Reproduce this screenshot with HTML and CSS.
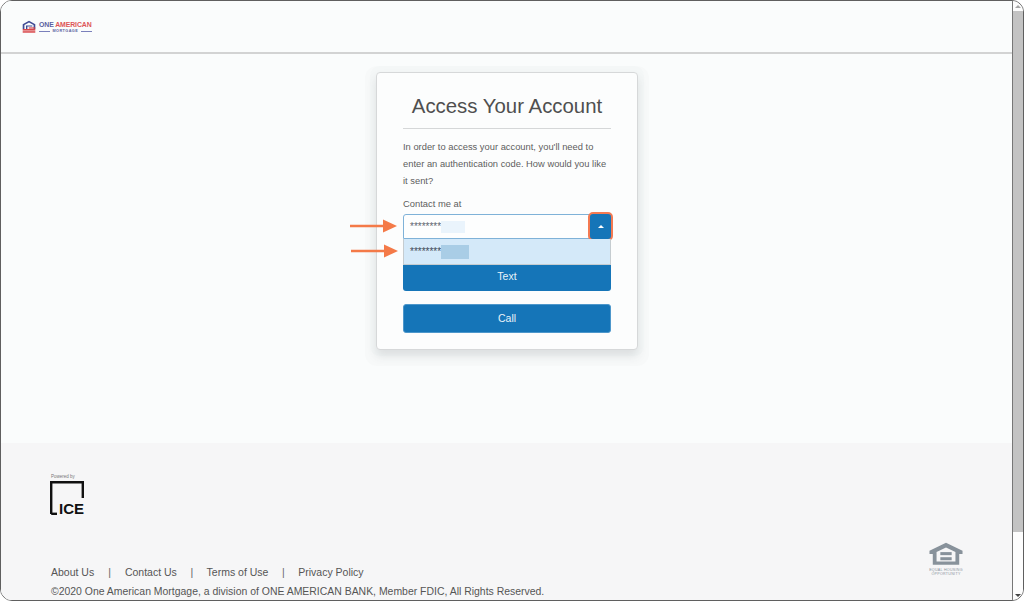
FILE: index.html
```html
<!DOCTYPE html>
<html lang="en">
<head>
<meta charset="utf-8">
<title>Access Your Account</title>
<link rel="stylesheet" href="styles.css">
</head>
<body>
<div class="window">
  <div class="page">
    <header class="topbar">
      <div class="logo">
        <svg class="logo-mark" width="14" height="13" viewBox="0 0 14 13">
          <path d="M0.7 9V4.2L7 0.8l6.3 3.4V9H11.6V5.1L7 2.6 2.4 5.1V9z" fill="#3f4a94"/>
          <path d="M4 9V5.4h6.3v1.2H5.4V9z" fill="#3f4a94"/>
          <rect x="0.7" y="9" width="12.6" height="1.6" fill="#d9474a"/>
          <rect x="0.7" y="11.2" width="12.6" height="1.5" fill="#d9474a"/>
          <rect x="6.8" y="7.4" width="6.5" height="1.2" fill="#d9474a"/>
        </svg>
        <div class="logo-text">
          <div class="logo-name"><span class="logo-one">ONE </span><span class="logo-american">AMERICAN</span></div>
          <div class="logo-sub"><span class="logo-rule"></span><span>MORTGAGE</span><span class="logo-rule"></span></div>
        </div>
      </div>
    </header>
    <main class="content">
      <section class="card">
        <h1 class="card-title">Access Your Account</h1>
        <p class="card-intro">In order to access your account, you'll need to enter an authentication code. How would you like it sent?</p>
        <label class="field-label">Contact me at</label>
        <div class="select-row">
          <svg class="arrow" width="48" height="14" viewBox="0 0 48 14"><path d="M0 7h36" stroke="#f47a48" stroke-width="2.4"/><path d="M33 0.5L47 7 33 13.5z" fill="#f47a48"/></svg>
          <div class="select">
            <span class="mask">********<span class="redact redact-light"></span></span>
            <span class="select-btn"><span class="caret"></span></span>
          </div>
        </div>
        <div class="option-row">
          <svg class="arrow" width="48" height="14" viewBox="0 0 48 14"><path d="M0 7h36" stroke="#f47a48" stroke-width="2.4"/><path d="M33 0.5L47 7 33 13.5z" fill="#f47a48"/></svg>
          <div class="option"><span class="mask">********<span class="redact redact-dark"></span></span></div>
        </div>
        <button class="btn btn-text" type="button">Text</button>
        <button class="btn btn-call" type="button">Call</button>
      </section>
    </main>
    <footer class="footer">
      <div class="powered">
        <div class="powered-label">Powered by</div>
        <div class="ice">
          <svg class="ice-frame" width="34" height="34" viewBox="0 0 34 34"><path d="M1.2 33V1.2H32.8V17" fill="none" stroke="#111" stroke-width="2.4"/><path d="M1.2 32.8H7" stroke="#111" stroke-width="2.4"/></svg>
          <span class="ice-text">ICE</span>
        </div>
      </div>
      <div class="footer-bottom">
        <div class="footer-info">
          <nav class="links">
            <a>About Us</a><span class="sep sep-wide">|</span><a>Contact Us</a><span class="sep">|</span><a>Terms of Use</a><span class="sep">|</span><a>Privacy Policy</a>
          </nav>
          <p class="copyright">©2020 One American Mortgage, a division of ONE AMERICAN BANK, Member FDIC, All Rights Reserved.</p>
        </div>
        <div class="eho">
          <svg width="34" height="24" viewBox="0 0 36 24"><path fill-rule="evenodd" d="M18 0L35.5 8.6V12H32V23.5H4V12H0.5V8.6zM8 10v10h20V10L18 5z" fill="#88929b"/><rect x="12" y="10" width="12" height="3.2" fill="#88929b"/><rect x="12" y="15.4" width="12" height="3.2" fill="#88929b"/></svg>
          <div class="eho-text">EQUAL HOUSING<br>OPPORTUNITY</div>
        </div>
      </div>
    </footer>
  </div>
  <aside class="scrollbar">
    <span class="tri tri-up"></span>
    <span class="thumb"></span>
    <span class="tri tri-down"></span>
  </aside>
</div>
</body>
</html>
```
FILE: styles.css
```css
* { box-sizing: border-box; }
html, body { margin: 0; height: 100%; background: #fff; overflow: hidden; }
body { font-family: "Liberation Sans", Arial, sans-serif; color: #555; }

.window {
  width: 1024px; height: 601px;
  display: flex;
  border: 1px solid #5f5f5f;
  border-radius: 12px;
  overflow: hidden;
  background: #fff;
}
.page { flex: 1; display: flex; flex-direction: column; background: #fafcfc; min-width: 0; border-right: 1px solid #777; }

.topbar {
  height: 53px; flex: none;
  display: flex; align-items: center;
  padding: 0 0 0 21px;
  border-bottom: 2px solid #d2d3d3;
  background: #fafcfc;
}
.logo { display: flex; align-items: center; gap: 3px; }
.logo-mark { display: block; }
.logo-text { display: flex; flex-direction: column; margin-top: 1px; }
.logo-name { font-size: 6.9px; font-weight: 700; line-height: 8px; white-space: nowrap; letter-spacing: -0.1px; }
.logo-one { color: #5a61a0; }
.logo-american { color: #dd5557; }
.logo-sub { display: flex; align-items: center; gap: 3px; font-size: 3.8px; line-height: 5px; color: #5a61a0; font-weight: 700; letter-spacing: .4px; }
.logo-rule { flex: 1; height: 1px; background: #7a80bb; }

.content { flex: 1; display: flex; justify-content: center; align-items: flex-start; padding: 18px 0 0 1px; min-height: 0; }
.card {
  width: 262px; height: 278px;
  padding: 0 26px;
  background: #fcfdfd;
  border: 1px solid #d6d8d9;
  border-radius: 4px;
  box-shadow: 0 6px 10px rgba(60,70,75,.13), 0 0 0 6px rgba(120,130,135,.02), 0 5px 0 11px rgba(120,130,135,.022);
}
.card-title {
  margin: 21px 0 0; padding-bottom: 9px;
  font-size: 20.4px; line-height: 25px; font-weight: 400; text-align: center;
  color: #4f4f4f;
  border-bottom: 1px solid #d5d7d8;
}
.card-intro { margin: 10px 0 0; font-size: 9.35px; line-height: 17px; color: #5e5e5e; }
.field-label { display: block; margin-top: 5px; font-size: 9.4px; line-height: 17px; color: #5e5e5e; }

.select-row, .option-row { position: relative; }
.arrow { position: absolute; left: -53px; top: 5px; }
.select-row { margin-top: 2px; }
.select {
  height: 25px;
  display: flex; align-items: center; justify-content: space-between;
  padding-left: 6px;
  background: #fdfefe;
  border: 1px solid #7fb2d8;
  border-radius: 3px 3px 0 0;
}
.mask { font-size: 10px; color: #5d6670; display: flex; align-items: center; line-height: 12px; }
.redact { display: inline-block; height: 12px; }
.redact-light { width: 24px; background: #eaf4fc; margin-top: 1px; }
.redact-dark { width: 28px; background: #a9cde6; height: 14px; }
.select-btn {
  position: absolute; right: -2px; top: -2px;
  width: 25px; height: 29px;
  display: flex; align-items: center; justify-content: center;
  background: #1575b8;
  border: 2px solid #f47a52;
  border-radius: 5px;
}
.caret { width: 0; height: 0; border-left: 3.5px solid transparent; border-right: 3.5px solid transparent; border-bottom: 3.5px solid #fff; }

.option {
  height: 26px;
  display: flex; align-items: center;
  padding-left: 6px;
  background: #d4e9f9;
  border-left: 1px solid #c5ccd0;
  border-right: 1px solid #c5ccd0;
  border-bottom: 1px solid #c5ccd0;
}
.option .mask { color: #3e4a58; }
.option-row .arrow { left: -52px; top: 5px; }

.btn {
  display: block; width: 100%;
  font-family: inherit; font-size: 10.5px; color: #e8f2f9;
  background: #1575b8;
  border: 1px solid #4d97cb;
  cursor: pointer; padding: 0;
}
.btn-text { height: 26px; border: 0; border-radius: 0 0 3px 3px; padding-bottom: 5px; }
.btn-call { height: 29px; margin-top: 13px; border-radius: 3px; padding-bottom: 2px; }

.footer {
  flex: none; height: 157px;
  background: #f6f6f7;
  padding: 31px 0 0 50px;
  display: flex; flex-direction: column;
}
.powered-label { font-size: 4.5px; line-height: 6px; color: #777; }
.ice { position: relative; width: 34px; height: 34px; margin: 1px 0 0 -1px; }
.ice-frame { display: block; }
.ice-text { position: absolute; right: 0; bottom: 0; font-size: 15px; line-height: 13px; font-weight: 700; color: #111; background: #f6f6f7; padding-left: 2px; }

.footer-bottom { display: flex; justify-content: space-between; align-items: flex-start; margin-top: 27px; padding-right: 49px; }
.footer-info { margin-top: 23px; }
.links { display: flex; align-items: center; font-size: 10.5px; line-height: 14px; color: #555; }
.sep { margin: 0 13.5px; color: #666; }
.sep-wide { margin: 0 14px; }
.copyright { margin: 6px 0 0; font-size: 10.45px; line-height: 14px; color: #555; white-space: nowrap; }
.eho { display: flex; flex-direction: column; align-items: center; }
.eho svg { display: block; }
.eho-text { margin-top: 2px; font-size: 3.6px; line-height: 4.4px; text-align: center; color: #88929b; letter-spacing: .3px; }

.scrollbar { width: 10px; flex: none; display: flex; flex-direction: column; align-items: center; background: #fdfdfd; padding: 4px 0 3px; }
.thumb { width: 100%; height: 521px; margin-top: 3px; background: #c3c3c3; }
.tri { width: 0; height: 0; border-left: 3px solid transparent; border-right: 3px solid transparent; }
.tri-up { border-bottom: 3px solid #a5a5a5; }
.tri-down { margin-top: auto; border-top: 3px solid #444; }
```
